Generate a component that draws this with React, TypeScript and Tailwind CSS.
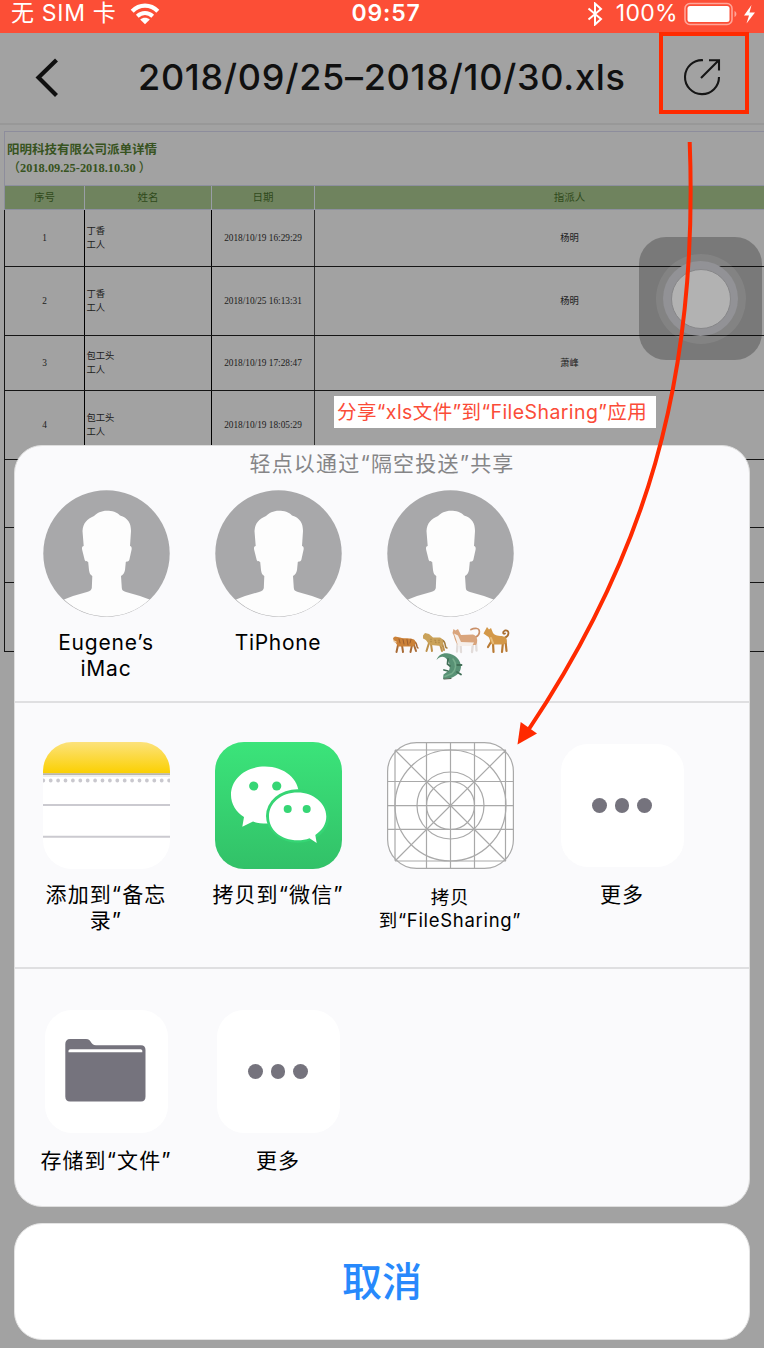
import React from "react";

const SANS = "font-['Inter','Noto_Sans_CJK_SC',sans-serif]";
const SERIF = "font-['Liberation_Serif','Noto_Sans_CJK_SC',serif]";

const rows = [
  { id: "1", name: "丁香", date: "2018/10/19 16:29:29", by: "杨明", h: "h-[57px]" },
  { id: "2", name: "丁香", date: "2018/10/25 16:13:31", by: "杨明", h: "h-[69px]" },
  { id: "3", name: "包工头", date: "2018/10/19 17:28:47", by: "萧峰", h: "h-[55px]" },
  { id: "4", name: "包工头", date: "2018/10/19 18:05:29", by: "", h: "h-[69px]" },
  { id: "", name: "", date: "", by: "", h: "h-[68px]" },
  { id: "", name: "", date: "", by: "", h: "h-[55px]" },
  { id: "", name: "", date: "", by: "", h: "h-[69px]" },
];

function StatusBar() {
  return (
    <div className="grid h-[33px] grid-cols-[1fr_auto_1fr] items-start bg-[#fc4e36] text-white">
      <div className="flex h-[27px] items-center pl-[11px]">
        <span className="text-[23px] leading-[27px] tracking-[0.7px] whitespace-pre">无 SIM 卡</span>
        <svg className="ml-[13px]" width="30" height="22" viewBox="0 0 30 22" fill="none" stroke="white">
          <path d="M2.2 8.2C9.5.8 20.500 .8 27.800 8.200" strokeWidth="4.200" />
          <path d="M7.300 13.200C11.800 9 18.200 9 22.700 13.200" strokeWidth="4" />
          <path d="M15 21.200L10.200 16.600C13 14.200 17 14.200 19.800 16.600Z" fill="white" stroke="none" />
        </svg>
      </div>
      <div className="h-[27px] pl-[8px] text-[23px] leading-[27px] font-semibold tracking-[0.8px]">09:57</div>
      <div className="flex h-[27px] items-center justify-end pr-[8px]">
        <svg width="16" height="24" viewBox="0 0 16 24" fill="none" stroke="white" strokeWidth="2">
          <path d="M1.500 6.500L14 17L8 22.500V1.500L14 7L1.500 17.500" />
        </svg>
        <span className="ml-[13px] text-[23px] leading-[27px] tracking-[0.3px]">100%</span>
        <svg className="ml-[6px]" width="72" height="24" viewBox="0 0 72 24">
          <rect x="1" y="1.500" width="47" height="21" rx="5" fill="none" stroke="#ffa598" strokeWidth="1.600" />
          <rect x="3.500" y="4" width="42" height="16" rx="2.500" fill="white" />
          <path d="M50.500 9C53 10 53 14 50.500 15Z" fill="#ffa598" />
          <path d="M67.500 3L60 13.500H65L62.500 21.500L71 10.500H65.500Z" fill="white" />
        </svg>
      </div>
    </div>
  );
}

function NavBar() {
  return (
    <div className="flex h-[92px] items-center border-b-2 border-[#989898] bg-[#a2a2a2] text-[#101010]">
      <svg className="ml-[34px] shrink-0" width="28" height="42" viewBox="0 0 28 42" fill="none" stroke="#101010" strokeWidth="4.200">
        <path d="M22.500 3L4.500 20.500L22.500 38.500" />
      </svg>
      <h1 className="mt-[-2px] ml-[76px] w-[490px] shrink-0 text-[36px] leading-[44px] font-medium tracking-[0.7px] whitespace-nowrap">
        2018/09/25–2018/10/30.xls
      </h1>
      <div className="mt-[-11px] ml-[31px] flex h-[82px] w-[90px] shrink-0 items-center justify-center border-4 border-[#ff2a00]">
        <svg className="mt-[8px] ml-[-4px]" width="38" height="38" viewBox="0 0 38 38" fill="none" stroke="#151515" strokeWidth="2.100">
          <path d="M20 2.200A17 17 0 1 0 36 19" />
          <path d="M18 20L35 3M26 2.200H36V12.500" />
        </svg>
      </div>
    </div>
  );
}

function Sheet() {
  const cols = "grid grid-cols-[80px_127px_103px_509px]";
  return (
    <div className="w-[764px] overflow-hidden pt-[6px] pl-[4px]">
      <div className={`w-[820px] text-[#202020] ${SERIF}`}>
        <div className="h-[54px] border border-b-0 border-[#8d8d9c] pt-[10px] pl-[2px] text-[12.5px] leading-[17.5px] font-bold text-[#375320]">
          <div>阳明科技有限公司派单详情</div>
          <div className="flex">
            <span className="w-[13px] text-right font-medium">（</span>
            <span className="text-[12.400px]">2018.09.25-2018.10.30</span>
            <span className="pl-[3px] font-medium">）</span>
          </div>
        </div>
        <div className={`${cols} h-[25px] border-y border-l border-[#8d8f9e] bg-[#6f835e] text-center text-[10.500px] leading-[24px] text-[#2f4a1b]`}>
          <div className="border-r border-[#9a9ea6]">序号</div>
          <div className="border-r border-[#9a9ea6]">姓名</div>
          <div className="border-r border-[#9a9ea6]">日期</div>
          <div>指派人</div>
        </div>
        {rows.map((r, i) => (
          <div key={i} className={`${cols} ${r.h} border-b border-l border-[#151515] text-[9.300px] leading-[14px]`}>
            <div className="flex items-center justify-center border-r border-black">{r.id}</div>
            <div className="flex flex-col justify-center border-r border-black pl-[1.500px]">
              <span>{r.name}</span>
              <span>{r.name ? "工人" : ""}</span>
            </div>
            <div className="flex items-center justify-center border-r border-[#303030] whitespace-nowrap">{r.date}</div>
            <div className="flex items-center justify-center">{r.by}</div>
          </div>
        ))}
      </div>
    </div>
  );
}

function Avatar() {
  return (
    <svg width="127" height="127" viewBox="0 0 127 127">
      <circle cx="63.500" cy="63.500" r="63.200" fill="#a8a8aa" />
      <path
        d="M64 20.700C58 20.700 54 23 51 26C44 29 40 33 39.500 41L40.700 56C39 56 38.700 58 39.200 60L41.700 70C42.500 72 44 71 45.200 72L46 80C46.500 84 48 85 49.300 86L48.800 98C48 101 46 101.300 44 102L30 106L21 109.500A62.500 62.500 0 0 0 106.500 109.500L97 106L83 102C80 101 79 100.500 78.800 98L78 86C80 85 81.500 83 82 80L82.800 72C84 71 85.500 72 86.300 70L88.500 60C89 58 88.500 56 87 56L88 41C88 33 85 28 77 25.500C74 22 69 20.700 64 20.700Z"
        fill="#fdfdfd"
      />
    </svg>
  );
}

function NotesIcon() {
  return (
    <svg width="127" height="127" viewBox="0 0 127 127">
      <defs>
        <linearGradient id="notes" x1="0" y1="0" x2="0" y2="1">
          <stop offset="0" stopColor="#fce27c" />
          <stop offset="1" stopColor="#fbd000" />
        </linearGradient>
        <clipPath id="notesClip"><rect width="127" height="127" rx="29" /></clipPath>
      </defs>
      <g clipPath="url(#notesClip)">
        <rect width="127" height="127" fill="white" />
        <rect width="127" height="31.500" fill="url(#notes)" />
        <path d="M0 32.200H127" stroke="#b9b6ad" strokeWidth="1.800" />
        <path d="M0 34H127" stroke="#e8e8e8" strokeWidth="1.600" />
        <path d="M.3 38.500H127" stroke="#c9c8ce" strokeWidth="3.800" strokeLinecap="round" strokeDasharray="0 7.400" />
        <path d="M0 63H127M0 94.700H127" stroke="#cbcad0" strokeWidth="2" />
      </g>
    </svg>
  );
}

function WeChatIcon() {
  return (
    <svg width="127" height="127" viewBox="0 0 127 127">
      <defs>
        <linearGradient id="wechat" x1="0" y1="0" x2="0" y2="1">
          <stop offset="0" stopColor="#3be47a" />
          <stop offset="1" stopColor="#32c168" />
        </linearGradient>
      </defs>
      <rect width="127" height="127" rx="29" fill="url(#wechat)" />
      <path d="M50 24.500C30.500 24.500 16 37 16 53C16 62 21 70 29 75L27.300 84.700L38 79.600C42 81 46.500 81.400 52 81.400C70 81.400 84 69 84 53C84 37 69.500 24.500 50 24.500Z" fill="white" />
      <ellipse cx="82.700" cy="74" rx="31.700" ry="26.800" fill="#36d574" />
      <path d="M82.700 50.500C66 50.500 54 61 54 74.500C54 88 66 98.300 82.700 98.300C87 98.300 91 97.500 94.500 96.200L101.700 101L100.300 93C107.500 88 111.300 82 111.300 74.500C111.300 61 98 50.500 82.700 50.500Z" fill="white" />
      <g fill="#36d675">
        <circle cx="38.700" cy="44" r="4.600" />
        <circle cx="61.700" cy="44" r="4.600" />
        <circle cx="72.700" cy="67" r="4" />
        <circle cx="91.700" cy="67" r="4" />
      </g>
    </svg>
  );
}

function GridIcon() {
  return (
    <svg width="127" height="127" viewBox="0 0 127 127" fill="none" stroke="#a9a9a9" strokeWidth="1.200">
      <rect x=".6" y=".6" width="125.800" height="125.800" rx="29" fill="white" />
      <path d="M8 8.500V118.500M118.500 8.500V118.500M39.500 .6V126.400M63.500 .6V126.400M87.500 .6V126.400M8 8H119M8 119H119M.6 39.500H126.400M.6 63.700H126.400M.6 87.300H126.400M8 8L119 119M119 8L8 119" />
      <circle cx="63.500" cy="63.500" r="55.500" />
      <circle cx="63.500" cy="63.500" r="33.500" />
      <circle cx="63.500" cy="63.500" r="24" />
    </svg>
  );
}

function MoreIcon() {
  return (
    <div className="flex h-[123px] w-[123px] items-center justify-center gap-[8px] rounded-[27px] bg-white">
      <i className="h-[14.500px] w-[14.500px] rounded-full bg-[#75737d]" />
      <i className="h-[14.500px] w-[14.500px] rounded-full bg-[#75737d]" />
      <i className="h-[14.500px] w-[14.500px] rounded-full bg-[#75737d]" />
    </div>
  );
}

function FolderIcon() {
  return (
    <div className="flex h-[123px] w-[123px] items-center justify-center rounded-[27px] bg-white">
      <svg className="mt-[-3px] mr-[2px]" width="81" height="63" viewBox="0 0 81 63">
        <path d="M5 0H21C27 0 25 6.300 31 6.300H76C79 6.300 80.500 8 80.500 11V57.500C80.500 61 79 62.500 76 62.500H5C2 62.500 .3 61 .3 57.500V5C.3 2 2 0 5 0Z" fill="#75737d" />
        <path d="M3.500 13.300V12C3.500 11 4.300 10.300 5.300 10.300H75.500C76.500 10.300 77.300 11 77.300 12V13.300Z" fill="white" />
      </svg>
    </div>
  );
}

function Animals() {
  return (
    <svg className="mt-[-4px]" width="120" height="56" viewBox="0 0 120 56" fill="none" strokeLinecap="round" strokeLinejoin="round">
      {/* tiger */}
      <g>
        <path d="M8 19L6.500 26M12 19L13 26M22 19L20.500 26M24 19L26 25" stroke="#a96b36" strokeWidth="2" />
        <path d="M24 15.500C28 17 26 22 28 22" stroke="#a4612c" strokeWidth="1.500" />
        <path d="M3 12L5 10.500L10 11.500C15 13 20 11.500 24 13.500C27 16 25 20.500 22 20.500L9 20.500C6 19.500 7 16.500 4 16Z" fill="#cb8138" />
        <path d="M13 13.500L14 18M17 13.500L18 19M21 13.500L20 17M9 13L10 17" stroke="#95592c" strokeWidth=".9" />
        <path d="M4 15L6 16" stroke="#f0dcc0" strokeWidth="1.300" />
      </g>
      {/* leopard */}
      <g>
        <path d="M39 17L36.500 25M41 18L42 25M50 18L52 25M52 17L54 24" stroke="#bd914b" strokeWidth="2" />
        <path d="M52 14C57 16 54 22 57 22" stroke="#a27b3d" strokeWidth="1.500" />
        <path d="M33 9.500L35 7L39 8L43 11.500L50 11.500C54 13 54 19 51 20L41 19C37 18 38 14 33 12.500Z" fill="#caa25a" />
        <path d="M41 13V17M45 14L46 17M49 14V17" stroke="#a88144" strokeWidth="1.100" strokeDasharray=".6 1.600" />
      </g>
      {/* cat */}
      <g>
        <path d="M67.500 17L67 25.500M70.500 17L71 26M83 17L82 26M86 16L86.500 24.500" stroke="#e2dcda" strokeWidth="2.300" />
        <path d="M84 11C90 11 91 3 87 2.500C84 2 82 3 81 3.500" stroke="#c98f68" strokeWidth="1.700" />
        <path d="M63.500 3L65.500 4.500L68 3L71 9L83 8.500C88 10 88 16 86 19L68 19C64 14 65 11 62.500 7Z" fill="#d9a47c" />
        <path d="M64 7.500L68 9.500L71 16L84 16.500L82 20L68 20L66 13Z" fill="#f6efea" />
      </g>
      {/* dog */}
      <g>
        <path d="M101 16L98 21M103 17L103.500 26M113 16L112 26M115.500 15L116.500 25" stroke="#b97b35" strokeWidth="2.200" />
        <path d="M114 12C120 10 119.500 3.500 115 4.500C112 6 113 8.500 115 7.500" stroke="#aa6f30" strokeWidth="1.800" />
        <path d="M97 1L99 3.500L101 2L103 7C106 11 111 9 115 11C118 13 117 17 114 18.500L102 18.500C99 16 101 12 97 10L93.500 7.500Z" fill="#d39849" />
        <path d="M101 12L103 17" stroke="#e7bd7c" strokeWidth="2" />
      </g>
      {/* crocodile */}
      <g>
        <path d="M46.500 34C48 29.500 52 27 57 27.300C65 28 71 34 71 41C70.500 47 66 50 61 52L53 53L53.500 48.500L59 44.500C61 40 59 34.500 55 31.500C52 30 49.500 31 46.500 34Z" fill="#589175" />
        <path d="M58 33L57.500 38L60 40M67 39L71.500 39M67 46L71 48.500M58 45L54 44" stroke="#416f57" strokeWidth="1.800" />
        <path d="M55 50.500L62 47.500C66 44 67 38 63 33" stroke="#76ac8c" strokeWidth="1.500" />
        <path d="M54 53L61 52.500" stroke="#475d4a" strokeWidth="1.100" />
      </g>
    </svg>
  );
}

function Item({ icon, small, children }: { icon: React.ReactNode; small?: boolean; children?: React.ReactNode }) {
  return (
    <div className="flex w-[172px] shrink-0 flex-col items-center">
      <div className="flex h-[127px] items-center">{icon}</div>
      <div
        className={
          small
            ? "mt-[17px] text-center text-[18.500px] leading-[22.500px] tracking-[0.7px] whitespace-nowrap"
            : "mt-[13px] text-center text-[21px] leading-[25.500px] tracking-[1.1px] whitespace-nowrap"
        }
      >
        {children}
      </div>
    </div>
  );
}

function ShareSheet() {
  return (
    <div className="absolute top-[445px] left-[14px] w-[736px] text-black">
      <div className="h-[762px] overflow-hidden rounded-[28px] border border-[#dedede] bg-[#fafafc]">
        <div className="h-[257px] border-b-2 border-[#dfdfe1]">
          <div className="h-[44px] pt-[4px] text-center text-[21px] leading-[28px] tracking-[1.200px] text-[#858587]">
            轻点以通过“隔空投送”共享
          </div>
          <div className="flex pl-[5px]">
            <Item icon={<Avatar />}><span className="tracking-[0.8px]">Eugene’s<br />iMac</span></Item>
            <Item icon={<Avatar />}><span className="tracking-[0.700px]">TiPhone</span></Item>
            <Item icon={<Avatar />}><Animals /></Item>
          </div>
        </div>
        <div className="flex h-[266px] border-b-2 border-[#dfdfe1] pt-[39px] pl-[5px]">
          <Item icon={<NotesIcon />}>添加到“备忘<br />录”</Item>
          <Item icon={<WeChatIcon />}>拷贝到“微信”</Item>
          <Item icon={<GridIcon />} small>拷贝<br />到“FileSharing”</Item>
          <Item icon={<MoreIcon />}>更多</Item>
        </div>
        <div className="flex pt-[39px] pl-[5px]">
          <Item icon={<FolderIcon />}>存储到“文件”</Item>
          <Item icon={<MoreIcon />}>更多</Item>
        </div>
      </div>
      <button className="mt-[16px] block h-[117px] w-full rounded-[28px] border border-[#e4e4e4] bg-white text-[40px] leading-[115px] font-medium text-[#2789fc]">
        取消
      </button>
    </div>
  );
}

export default function App() {
  return (
    <main className={`relative h-[1348px] w-[764px] overflow-hidden bg-[#a2a2a2] ${SANS}`}>
      <StatusBar />
      <NavBar />
      <Sheet />
      <div className="absolute top-[237px] left-[639px] flex h-[123px] w-[123px] items-center justify-center rounded-[27px] bg-black/25">
        <div className="flex h-[90px] w-[90px] items-center justify-center rounded-full bg-white/8">
          <div className="flex h-[75px] w-[75px] items-center justify-center rounded-full bg-[#929296]">
            <div className="h-[60px] w-[60px] rounded-full border border-[#878789] bg-[#b2b2b2]" />
          </div>
        </div>
      </div>
      <ShareSheet />
      <div className="absolute top-[396px] left-[334px] h-[32px] w-[322px] bg-white pl-[3px] text-[19.500px] leading-[32px] tracking-[0.420px] whitespace-nowrap text-[#fb4c38]">
        分享“xls文件”到“FileSharing”应用
      </div>
      <svg className="pointer-events-none absolute top-0 left-0" width="764" height="760" viewBox="0 0 764 760">
        <path d="M689.700 142C699 385 642 560 529 729" fill="none" stroke="#ff2a00" strokeWidth="4" />
        <path d="M517.500 744.500L520.700 722L537 733.500Z" fill="#ff2a00" />
      </svg>
    </main>
  );
}
